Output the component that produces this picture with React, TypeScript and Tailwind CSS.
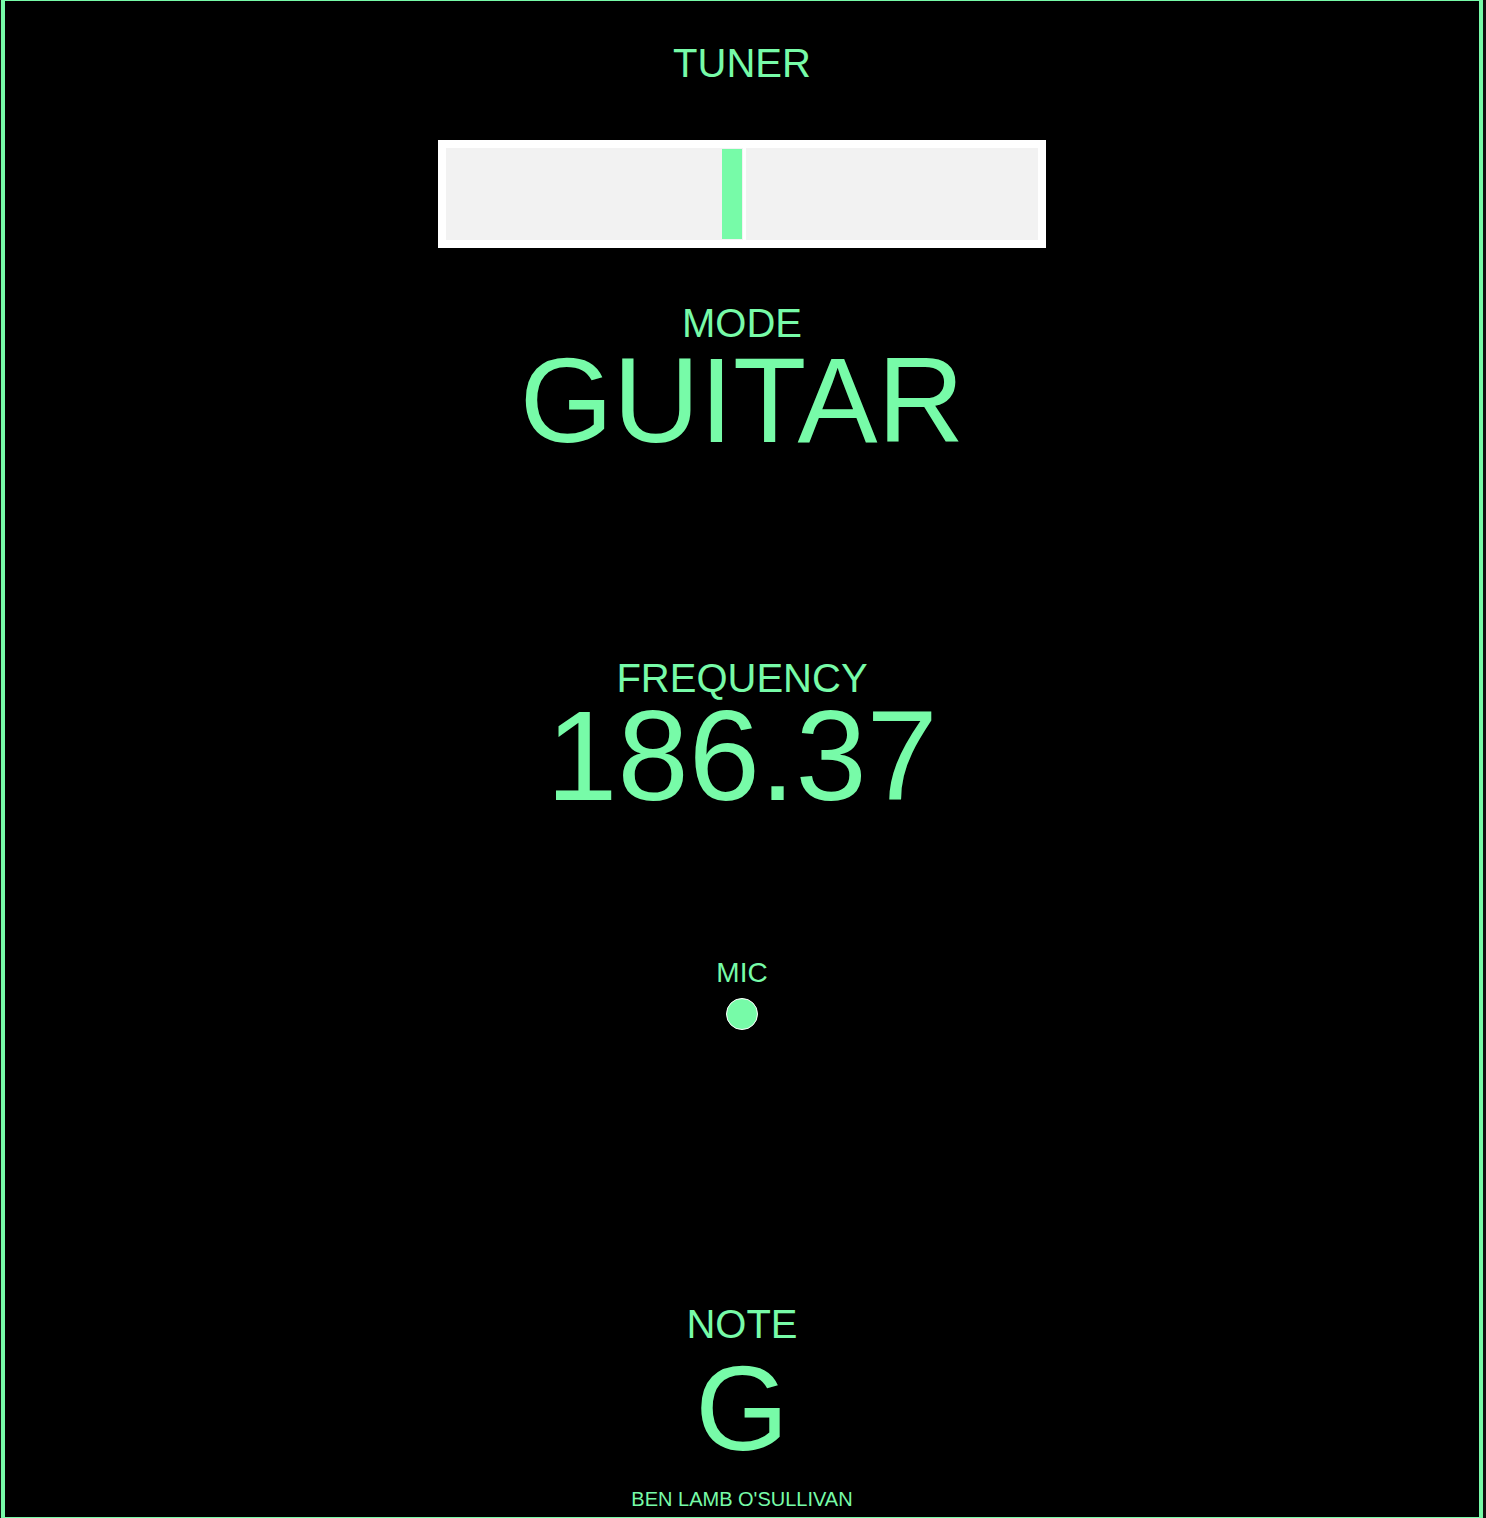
import React from "react";

export default function App() {
  const font = { fontFamily: '"Liberation Sans", Arial, Helvetica, sans-serif' };
  return (
    <div className="w-[1486px] h-[1518px] bg-[#111111] pl-[1px] pr-[3px]" style={font}>
      <div className="h-[1518px] bg-black border-[#77fba8] border-t border-b border-l-4 border-r-4 flex flex-col items-center text-[#77fba8]">
        <div className="mt-[42px] text-[40px] leading-[40px] h-[40px]">TUNER</div>

        <div className="mt-[57px] w-[608px] h-[108px] bg-white p-[8px]">
          <div className="w-full h-full bg-[#f2f2f2] flex pl-[276px]">
            <div className="w-[20px] my-[1px] bg-[#77fba8]" />
            <div className="w-[3px] h-full bg-white ml-[1px]" />
          </div>
        </div>

        <div className="mt-[55px] text-[40px] leading-[40px] h-[40px]">MODE</div>
        <div className="text-[120px] leading-[114px] h-[114px]">GUITAR</div>

        <div className="mt-[201px] text-[40px] leading-[40px] h-[40px]">FREQUENCY</div>
        <div className="text-[128px] leading-[116px] h-[116px]">186.37</div>

        <div className="mt-[145px] text-[28px] leading-[28px] h-[28px]">MIC</div>
        <div className="mt-[11px] w-[32px] h-[32px] rounded-full bg-[#77fba8] border border-white" />

        <div className="mt-[274px] text-[40px] leading-[40px] h-[40px]">NOTE</div>
        <div className="mt-[4px] text-[120px] leading-[120px] h-[120px]">G</div>

        <div className="mt-[21px] text-[20px] leading-[20px] h-[20px]">BEN LAMB O'SULLIVAN</div>
      </div>
    </div>
  );
}
